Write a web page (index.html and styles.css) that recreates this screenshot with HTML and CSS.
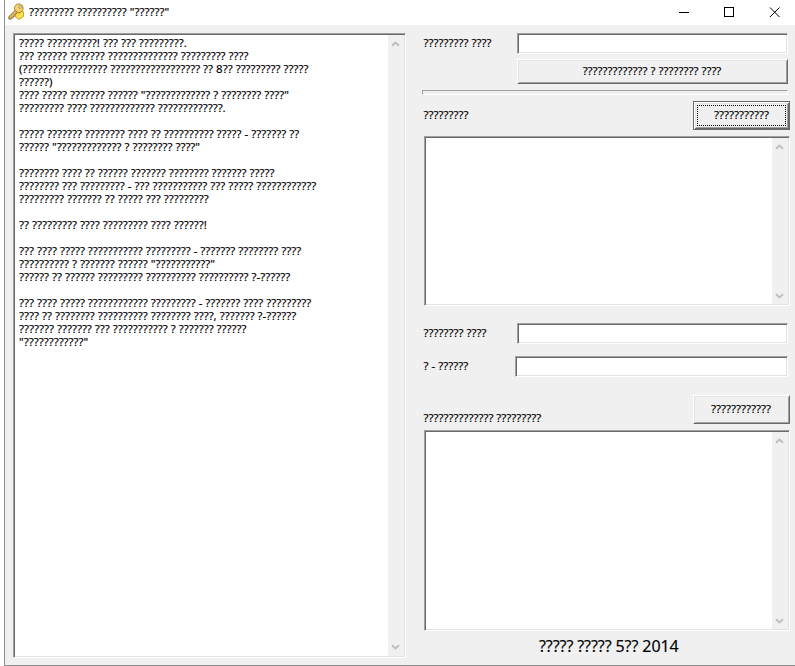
FILE: index.html
```html
<!DOCTYPE html>
<html lang="ru">
<head>
<meta charset="utf-8">
<title>????????? ?????????? "??????"</title>
<link rel="stylesheet" href="styles.css">
</head>
<body>
<div class="window">
  <header class="titlebar">
    <svg class="app-icon" width="17" height="17" viewBox="0 0 17 17">
      <path d="M7.500 10 L12 7 L15.500 8.500 V13.500 L11 16.500 L7.500 14Z" fill="#f7d532" stroke="#c79a1e" stroke-width=".8"/>
      <path d="M7.500 7 L1 13.500 L.8 16 L3.500 16 L4.200 14.300 L6 14 L6.200 12.300 L10 9" fill="#dcb665" stroke="#7d5c2c" stroke-width=".9"/>
      <circle cx="10.800" cy="5.200" r="4.300" fill="#f5d568" stroke="#a17a2c" stroke-width=".9"/>
      <circle cx="12" cy="4" r="1.300" fill="#fff" stroke="#94702c" stroke-width=".7"/>
      <path d="M9 12.500 L11.500 14 L14.500 10.500" fill="none" stroke="#fff7b0"/>
    </svg>
    <h1 class="title">????????? ?????????? "??????"</h1>
    <svg class="controls" width="101" height="11" viewBox="0 0 101 11" fill="none" stroke="#000">
      <path d="M0 5.500H10"/>
      <rect x="45.500" y=".5" width="9" height="9"/>
      <path d="M91 .5L100.500 10M100.500 .5L91 10"/>
    </svg>
  </header>
  <main class="client">
    <section class="memo help">
      <div class="memo-text">????? ??????????! ??? ??? ?????????.
??? ?????? ??????? ?????????????? ????????? ????
(????????????????? ?????????????????? ?? 8?? ????????? ?????
??????)
???? ????? ??????? ?????? "????????????? ? ???????? ????"
????????? ???? ????????????? ?????????????.

????? ??????? ???????? ???? ?? ?????????? ????? - ??????? ??
?????? "????????????? ? ???????? ????"

???????? ???? ?? ?????? ??????? ???????? ??????? ?????
???????? ??? ????????? - ??? ??????????? ??? ????? ????????????
????????? ??????? ?? ????? ??? ?????????

?? ????????? ???? ????????? ???? ??????!

??? ???? ????? ??????????? ????????? - ??????? ???????? ????
?????????? ? ??????? ?????? "???????????"
?????? ?? ?????? ????????? ?????????? ?????????? ?-??????

??? ???? ????? ???????????? ????????? - ??????? ???? ?????????
???? ?? ???????? ?????????? ???????? ????, ??????? ?-??????
??????? ??????? ??? ??????????? ? ??????? ??????
"????????????"</div>
      <div class="scrollbar">
        <svg width="9" height="6" viewBox="0 0 9 6"><path d="M1 4.700L4.500 1.500L8 4.700"/></svg>
        <svg width="9" height="6" viewBox="0 0 9 6"><path d="M1 1.300L4.500 4.500L8 1.300"/></svg>
      </div>
    </section>
    <section class="panel">
      <div class="row"><label>????????? ????</label><div class="field"></div></div>
      <button class="button create">????????????? ? ???????? ????</button>
      <div class="divider"></div>
      <div class="row action-row"><label>?????????</label><button class="button action default"><span>???????????</span></button></div>
      <div class="memo message">
        <div class="memo-text"></div>
        <div class="scrollbar">
          <svg width="9" height="6" viewBox="0 0 9 6"><path d="M1 4.700L4.500 1.500L8 4.700"/></svg>
          <svg width="9" height="6" viewBox="0 0 9 6"><path d="M1 1.300L4.500 4.500L8 1.300"/></svg>
        </div>
      </div>
      <div class="row key-row"><label>???????? ????</label><div class="field"></div></div>
      <div class="row cipher-row"><label>? - ??????</label><div class="field wide"></div></div>
      <div class="row action-row decode"><label>?????????????? ?????????</label><button class="button action">????????????</button></div>
      <div class="memo result">
        <div class="memo-text"></div>
        <div class="scrollbar">
          <svg width="9" height="6" viewBox="0 0 9 6"><path d="M1 4.700L4.500 1.500L8 4.700"/></svg>
          <svg width="9" height="6" viewBox="0 0 9 6"><path d="M1 1.300L4.500 4.500L8 1.300"/></svg>
        </div>
      </div>
      <footer class="credits">????? ????? 5?? 2014</footer>
    </section>
  </main>
</div>
</body>
</html>
```
FILE: styles.css
```css
* { box-sizing: border-box; }
body {
  margin: 0;
  background: #fff;
  color: #000;
  font: 11.5px/13px "Noto Sans", sans-serif;
  -webkit-text-stroke: 0.15px #000;
  overflow: hidden;
}
.window {
  display: flex;
  flex-direction: column;
  width: 791px;
  height: 666px;
  margin-left: 4px;
  border-left: 1px solid #919191;
  border-bottom: 1px solid #919191;
  background: #f0f0f0;
}
.titlebar {
  display: flex;
  align-items: flex-start;
  height: 25px;
  flex: none;
  padding: 3px 15px 0 3px;
  background: #fff;
}
.app-icon { flex: none; }
.title {
  margin: 2px 0 0 4px;
  font-size: 11.5px;
  line-height: 13px;
  font-weight: 400;
}
.controls { margin: 4px 0 0 auto; }
.client {
  display: flex;
  flex: 1;
  gap: 16px;
  padding: 8px 5px 7px 8px;
}
.memo {
  display: flex;
  padding: 1px;
  border: 1px solid;
  border-color: #a0a0a0 #fff #fff #a0a0a0;
  box-shadow: inset 1px 1px #696969, inset -1px -1px #e3e3e3;
  background: #fff;
}
.help { width: 393px; height: 625px; }
.memo-text {
  flex: 1;
  padding: 1px 0 0 4px;
  white-space: pre;
}
.scrollbar {
  display: flex;
  flex-direction: column;
  justify-content: space-between;
  width: 16px;
  padding: 6px 0 5px 3px;
  background: #f0f0f0;
}
.help .scrollbar { padding-bottom: 6px; }
.scrollbar path { fill: none; stroke: #bfbfbf; stroke-width: 2; }
.scrollbar svg { display: block; }
.panel {
  display: flex;
  flex-direction: column;
  width: 368px;
}
.row {
  display: flex;
  align-items: center;
  justify-content: space-between;
  padding: 0 2px 0 1.5px;
}
.row label { padding-bottom: 2px; }
.field {
  width: 271px;
  height: 21px;
  border: 1px solid;
  border-color: #a0a0a0 #fff #fff #a0a0a0;
  box-shadow: inset 1px 1px #696969, inset -1px -1px #e3e3e3;
  background: #fff;
}
.wide { width: 273px; }
.button {
  padding: 0 1px 2px 0;
  border: 1px solid;
  border-color: #fff #696969 #696969 #fff;
  border-radius: 0;
  box-shadow: inset 1px 1px #e3e3e3, inset -1px -1px #a0a0a0;
  background: #f0f0f0;
  color: #000;
  font: inherit;
}
.create { width: 271px; height: 25px; margin: 5px 0 0 95px; }
.divider {
  width: 366px;
  height: 5px;
  margin-top: 6px;
  border: 1px solid;
  border-color: #a0a0a0 #fff #fff #a0a0a0;
}
.action-row { margin-top: 6px; padding-right: 0; }
.action { width: 97px; height: 29px; }
.default {
  padding: 2px;
  border-color: #696969;
  box-shadow: inset 1px 1px #fff, inset -1px -1px #696969, inset 2px 2px #e3e3e3, inset -2px -2px #a0a0a0;
}
.default span {
  display: grid;
  place-items: center;
  height: 21px;
  margin: 1px;
  padding-bottom: 2px;
  border: 1px dotted #000;
}
.message { width: 366px; height: 170px; margin: 6px 0 0 2px; }
.key-row { margin-top: 17px; }
.cipher-row { margin-top: 12px; }
.decode { margin-top: 18px; align-items: flex-end; }
.decode label { margin-bottom: -2px; }
.result { width: 366px; height: 201px; margin: 6px 0 0 2px; }
.credits {
  margin: 5px 0 0 117px;
  font-size: 16px;
  line-height: 20px;
  letter-spacing: -0.1px;
}
```
